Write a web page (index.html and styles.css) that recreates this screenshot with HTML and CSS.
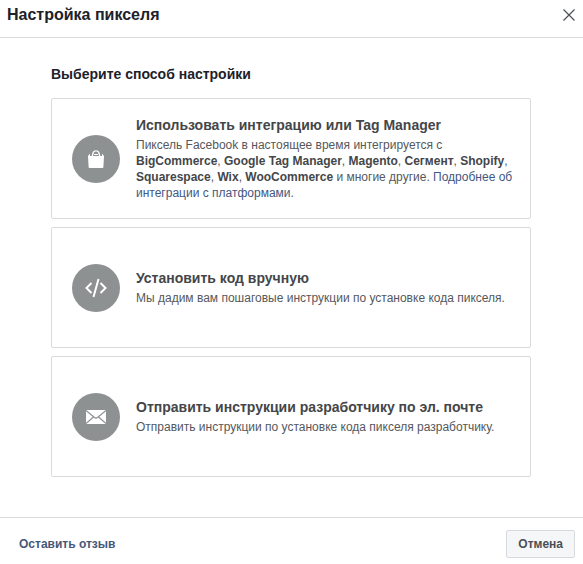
FILE: index.html
```html
<!DOCTYPE html>
<html lang="ru">
<head>
<meta charset="utf-8">
<title>Настройка пикселя</title>
<link rel="stylesheet" href="styles.css">
</head>
<body>
<div class="dialog" role="dialog" aria-labelledby="title">
  <header class="header">
    <h1 class="title" id="title">Настройка пикселя</h1>
    <button class="close" type="button" aria-label="Закрыть">
      <svg width="12" height="12" viewBox="0 0 12 12" fill="none" stroke="#4b4f56" stroke-width="1.2"><path d="M.5.5l11 11M11.5.5l-11 11"/></svg>
    </button>
  </header>
  <main class="content">
    <h2 class="subtitle">Выберите способ настройки</h2>
    <section class="card">
      <span class="icon">
        <svg width="18" height="18" viewBox="0 0 18 18" fill="none"><path d="M1 6l2-2.500V6h12V3.500L17 6l-.6 11a1 1 0 0 1-1 1H2.600a1 1 0 0 1-1-1z" fill="#fff"/><path d="M5 7l1.200-4.500Q6.800.8 9 .8t2.800 1.700L13 7" stroke="#fff" stroke-width="1.300"/><path d="M7 4.500h4" stroke="#fff"/></svg>
      </span>
      <div class="text">
        <h3 class="name">Использовать интеграцию или Tag Manager</h3>
        <p class="desc">Пиксель Facebook в настоящее время интегрируется с <b>BigCommerce</b>, <b>Google Tag Manager</b>, <b>Magento</b>, <b>Сегмент</b>, <b>Shopify</b>, <b>Squarespace</b>, <b>Wix</b>, <b>WooCommerce</b> и многие другие. <a class="link" href="#">Подробнее об интеграции с платформами</a>.</p>
      </div>
    </section>
    <section class="card">
      <span class="icon">
        <svg width="22" height="20" viewBox="0 0 22 20" fill="none" stroke="#fff" stroke-width="2"><path d="M6.500 5L1.500 10l5 5M15.500 5l5 5-5 5"/><path d="M13.500 1l-5 18"/></svg>
      </span>
      <div class="text">
        <h3 class="name">Установить код вручную</h3>
        <p class="desc">Мы дадим вам пошаговые инструкции по установке кода пикселя.</p>
      </div>
    </section>
    <section class="card">
      <span class="icon">
        <svg width="20" height="14" viewBox="0 0 20 14"><rect width="20" height="14" fill="#fff"/><path d="M0 .5l8.500 7q1.500 1.200 3 0L20 .5M0 13.500l7.500-6.500M20 13.500L12.500 7" fill="none" stroke="#8d9192" stroke-width="1.200"/></svg>
      </span>
      <div class="text">
        <h3 class="name">Отправить инструкции разработчику по эл. почте</h3>
        <p class="desc">Отправить инструкции по установке кода пикселя разработчику.</p>
      </div>
    </section>
  </main>
  <footer class="footer">
    <a class="feedback" href="#">Оставить отзыв</a>
    <button class="cancel" type="button">Отмена</button>
  </footer>
</div>
</body>
</html>
```
FILE: styles.css
```css
* { box-sizing: border-box; }
body { margin: 0; background: #fff; color: #1d2129; font-family: "Liberation Sans", Arial, sans-serif; font-size: 12px; line-height: 16px; }
h1, h2, h3, p { margin: 0; }
a { text-decoration: none; }
a:hover { text-decoration: underline; }
.dialog { display: flex; flex-direction: column; min-height: 100vh; }
.header { display: flex; align-items: center; justify-content: space-between; height: 38px; padding: 0 8px 8px 7px; border-bottom: 1px solid #d8dadd; }
.title { font-size: 16px; line-height: 20px; }
.close { display: flex; padding: 0; border: 0; background: none; cursor: pointer; }
.content { display: flex; flex: 1; flex-direction: column; gap: 8px; padding: 26px 52px 40px 51px; }
.subtitle { margin-bottom: 6px; font-size: 14px; line-height: 20px; }
.card { display: flex; align-items: center; gap: 16px; min-height: 121px; padding: 12px 16px 12px 20px; border: 1px solid #d8dadd; border-radius: 2px; }
.icon { display: flex; flex: none; align-items: center; justify-content: center; width: 48px; height: 48px; border-radius: 50%; background: #8d9192; }
.text { padding-bottom: 2px; }
.name { margin-bottom: 2px; color: #444649; font-size: 14px; line-height: 20px; }
.desc { color: #55585c; }
.desc b { color: #444649; }
.link { color: #43577f; }
.footer { display: flex; align-items: center; justify-content: space-between; padding: 12px 8px 6px 19px; border-top: 1px solid #d8dadd; }
.feedback { color: #465878; font-weight: bold; }
.cancel { height: 28px; padding: 0 11px; border: 1px solid #d8dadd; border-radius: 2px; background: #f5f6f7; color: #4b4f56; font: bold 12px "Liberation Sans", Arial, sans-serif; cursor: pointer; }
```
